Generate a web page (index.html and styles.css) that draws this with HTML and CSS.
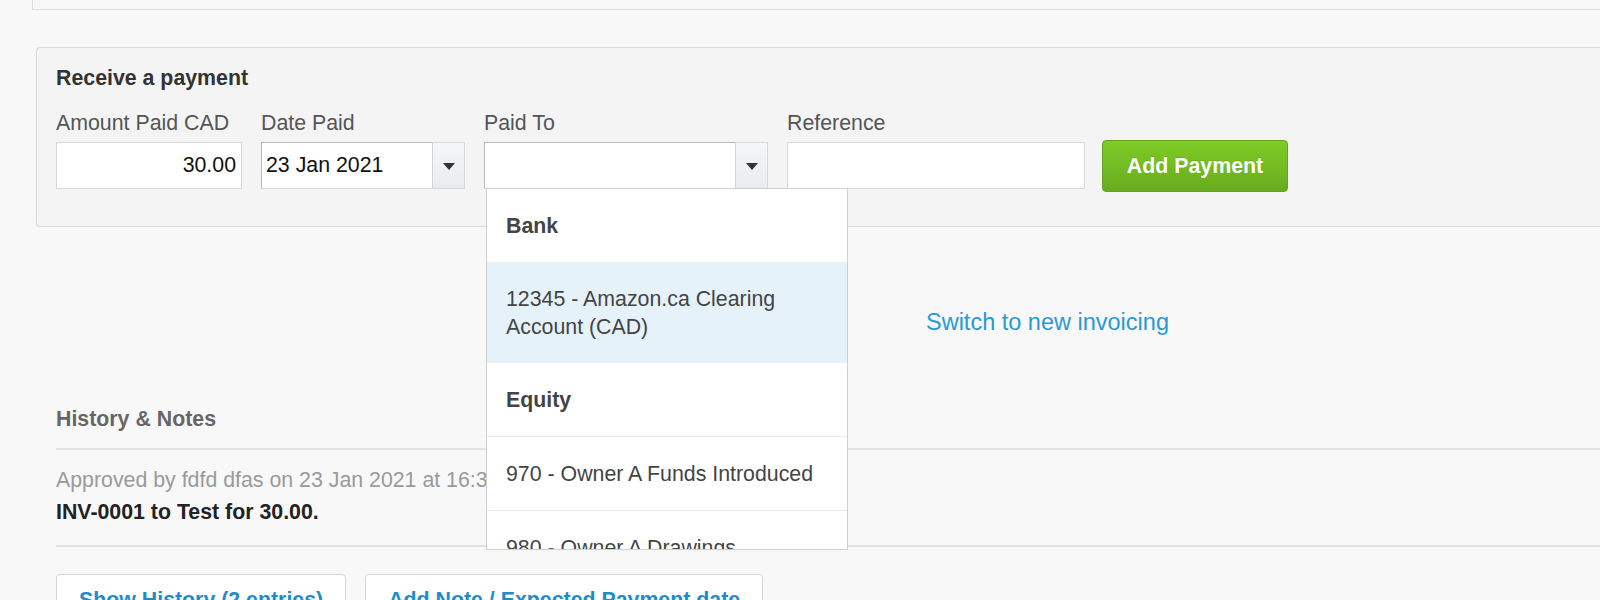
FILE: index.html
```html
<!DOCTYPE html>
<html lang="en">
<head>
<meta charset="utf-8">
<title>Receive a payment</title>
<link rel="stylesheet" href="styles.css">
</head>
<body>
<div class="top-panel"></div>

<section class="payment-box">
  <h2 class="box-title">Receive a payment</h2>
  <div class="fields">
    <div class="field">
      <label class="field-label">Amount Paid CAD</label>
      <div class="input amount">30.00</div>
    </div>
    <div class="field">
      <label class="field-label">Date Paid</label>
      <div class="combo date">
        <div class="combo-text inset">23 Jan 2021</div>
        <div class="combo-btn"><span class="tri"></span></div>
      </div>
    </div>
    <div class="field paid-to">
      <label class="field-label">Paid To</label>
      <div class="combo paid">
        <div class="combo-text inset"></div>
        <div class="combo-btn"><span class="tri"></span></div>
      </div>
      <div class="dropdown">
        <div class="dd-head">Bank</div>
        <div class="dd-item active">12345 - Amazon.ca Clearing Account (CAD)</div>
        <div class="dd-head">Equity</div>
        <div class="dd-item sep">970 - Owner A Funds Introduced</div>
        <div class="dd-item sep">980 - Owner A Drawings</div>
      </div>
    </div>
    <div class="field">
      <label class="field-label">Reference</label>
      <div class="input reference"></div>
    </div>
    <button class="btn-green">Add Payment</button>
  </div>
</section>

<div class="switch-row"><a class="switch-link" href="#">Switch to new invoicing</a></div>

<section class="history">
  <h3 class="history-title">History &amp; Notes</h3>
  <div class="history-entry">
    <div class="entry-meta">Approved by fdfd dfas on 23 Jan 2021 at 16:32</div>
    <div class="entry-text">INV-0001 to Test for 30.00.</div>
  </div>
  <div class="history-actions">
    <button class="btn-white">Show History (2 entries)</button>
    <button class="btn-white">Add Note / Expected Payment date</button>
  </div>
</section>
</body>
</html>
```

FILE: styles.css
```css
html, body {
  margin: 0;
  padding: 0;
}
body {
  background: #f8f8f8;
  font-family: "Liberation Sans", Arial, Helvetica, sans-serif;
  font-size: 21.33px;
  color: #333;
  overflow: hidden;
  height: 600px;
}

.top-panel {
  margin-left: 32px;
  height: 9px;
  background: #f8f8f8;
  border-left: 1px solid #dedede;
  border-bottom: 1px solid #dcdcdc;
}

.payment-box {
  margin: 37px 0 0 36px;
  height: 160px;
  background: #f4f4f4;
  border: 1px solid #dadada;
  border-right: none;
  border-radius: 4px 0 0 4px;
  padding: 18px 0 0 19px;
}
.box-title {
  margin: 0;
  font-size: 21.33px;
  line-height: 24px;
  font-weight: bold;
  color: #333;
}
.fields {
  display: flex;
  align-items: flex-end;
  gap: 19px;
  margin-top: 21px;
}
.field {
  display: flex;
  flex-direction: column;
}
.field-label {
  font-size: 21.33px;
  line-height: 24px;
  color: #555;
  margin-bottom: 7px;
}
.input {
  box-sizing: border-box;
  height: 47px;
  background: #fff;
  border: 1px solid #d8d8d8;
  font-size: 21.33px;
  line-height: 45px;
  color: #111;
  padding: 0 5px;
}
.input.amount {
  width: 186px;
  text-align: right;
}
.input.reference {
  width: 298px;
}
.combo {
  display: flex;
  height: 47px;
  box-sizing: border-box;
}
.combo.date { width: 204px; }
.combo.paid { width: 284px; }
.combo-text {
  flex: 1;
  background: #fff;
  border: 1px solid #d8d8d8;
  border-right: none;
  font-size: 21.33px;
  line-height: 45px;
  color: #111;
  padding: 0 4px;
}
.combo-text.inset {
  border-top-color: #b8b8b8;
  border-left-color: #b8b8b8;
}
.combo-btn {
  width: 33px;
  box-sizing: border-box;
  border: 1px solid #d8d8d8;
  border-left: 1px solid #d0d4d9;
  background: linear-gradient(#f5f6f8, #e9ebee);
  display: flex;
  align-items: center;
  justify-content: center;
}
.tri {
  width: 0;
  height: 0;
  border-left: 6px solid transparent;
  border-right: 6px solid transparent;
  border-top: 7px solid #333;
  margin-top: 2px;
}

.paid-to {
  position: relative;
}
.dropdown {
  position: absolute;
  left: 2px;
  top: calc(100% - 1px);
  width: 362px;
  height: 362px;
  box-sizing: border-box;
  background: #fff;
  border: 1px solid #cfcfcf;
  overflow: hidden;
  z-index: 10;
}
.dd-head {
  padding: 22.5px 19px;
  font-size: 21.33px;
  line-height: 28px;
  font-weight: bold;
  color: #444;
}
.dd-item {
  padding: 22.5px 19px;
  font-size: 21.33px;
  line-height: 28px;
  color: #444;
}
.dd-item.active {
  background: #e5f2f9;
}
.dd-item.sep {
  border-top: 1px solid #e3ebf1;
}

.btn-green {
  box-sizing: border-box;
  height: 52px;
  width: 186px;
  margin-left: -2px;
  margin-bottom: -3px;
  border: 1px solid #63a31d;
  border-radius: 4px;
  background: linear-gradient(#7dcc25, #69ab1f);
  color: #fff;
  font-family: "Liberation Sans", Arial, sans-serif;
  font-size: 21.33px;
  font-weight: bold;
  padding: 0;
  text-shadow: 0 -1px 0 rgba(0,0,0,0.1);
}

.switch-row {
  margin-top: 81px;
  padding-left: 926px;
  line-height: 28px;
  height: 28px;
}
.switch-link {
  font-size: 23.5px;
  color: #2a9ad0;
  text-decoration: none;
}

.history {
  margin: 70px 0 0 56px;
}
.history-title {
  margin: 0;
  font-size: 21.33px;
  line-height: 26px;
  font-weight: bold;
  color: #666;
}
.history-entry {
  margin-top: 16px;
  border-top: 2px solid #e2e2e2;
  border-bottom: 2px solid #e2e2e2;
  padding: 14px 0 17px;
}
.entry-meta {
  font-size: 21.33px;
  line-height: 32px;
  color: #9a9a9a;
}
.entry-text {
  font-size: 21.33px;
  line-height: 32px;
  font-weight: bold;
  color: #222;
}
.history-actions {
  display: flex;
  gap: 19px;
  margin-top: 27px;
}
.btn-white {
  box-sizing: border-box;
  height: 52px;
  padding: 0 22px;
  background: #fff;
  border: 1px solid #d4d4d4;
  border-radius: 4px;
  color: #1e8cc8;
  font-family: "Liberation Sans", Arial, sans-serif;
  font-size: 21.33px;
  font-weight: bold;
}
```
